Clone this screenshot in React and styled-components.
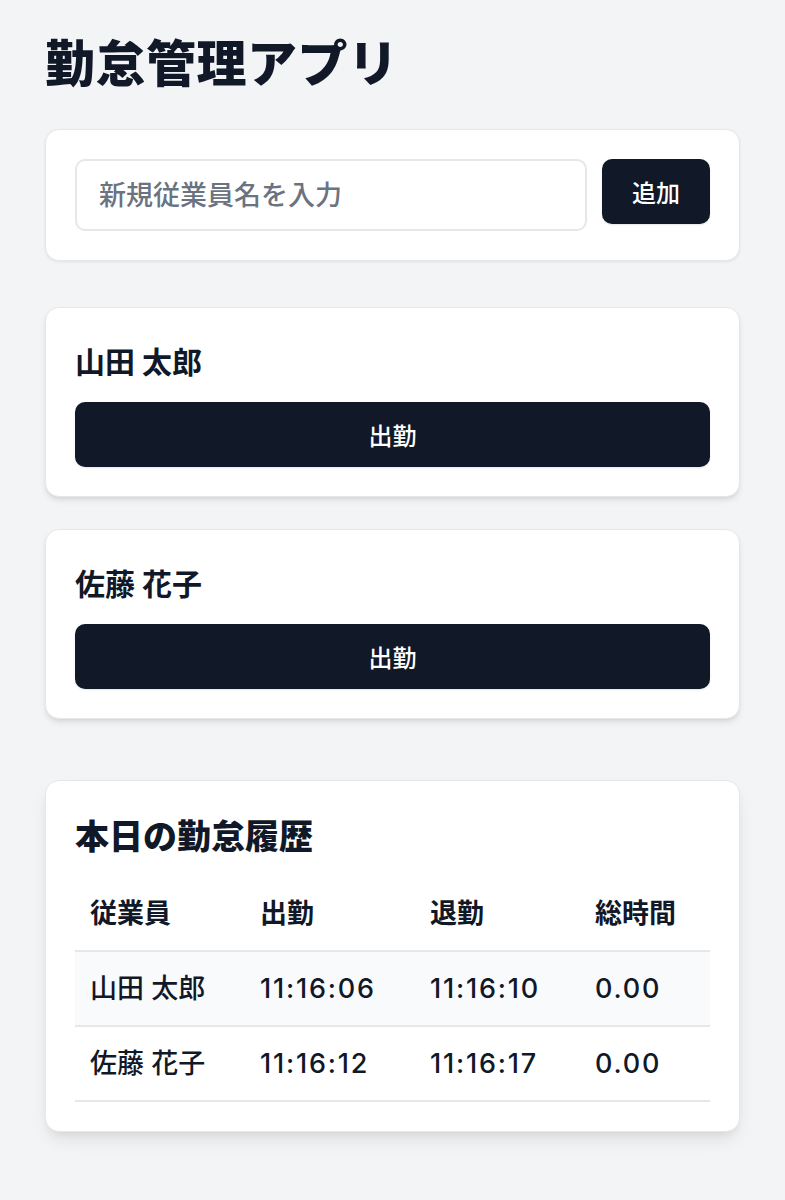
import React, { useState } from 'react';
import styled, { createGlobalStyle } from 'styled-components';

const GlobalStyle = createGlobalStyle`
	* {
		box-sizing: border-box;
	}
	body {
		margin: 0;
		background: #f3f4f6;
		color: #111827;
		font-family: 'Inter', 'Noto Sans CJK JP', sans-serif;
	}
`;

const Page = styled.div`
	padding: 34px 45px 60px;
	display: flex;
	flex-direction: column;
`;

const Title = styled.h1`
	margin: 0 0 35px;
	font-size: 50px;
	line-height: 60px;
	font-weight: 900;
	letter-spacing: 0.5px;
`;

const Card = styled.section`
	background: #fff;
	border: 1px solid #e5e7eb;
	border-radius: 14px;
	padding: 29px;
	box-shadow: ${({ $shadow }) =>
		$shadow === 'lg'
			? '0 10px 18px -4px rgba(0,0,0,0.1), 0 4px 8px -4px rgba(0,0,0,0.08)'
			: $shadow === 'md'
			? '0 4px 6px -1px rgba(0,0,0,0.1), 0 2px 4px -2px rgba(0,0,0,0.08)'
			: '0 1px 3px rgba(0,0,0,0.08)'};
`;

const FormRow = styled.form`
	display: flex;
	align-items: flex-start;
	gap: 15px;
	margin: 0;
`;

const NameInput = styled.input`
	flex: 1;
	height: 72px;
	border: 2px solid #e5e7eb;
	border-radius: 10px;
	padding: 0 22px;
	font-family: inherit;
	font-size: 27px;
	font-weight: 500;
	color: #111827;
	outline: none;
	&::placeholder {
		color: #6b7280;
	}
`;

const DarkButton = styled.button`
	height: 65px;
	padding: 0 30px;
	border: none;
	border-radius: 10px;
	background: #111827;
	color: #fff;
	font-family: inherit;
	font-size: 24px;
	font-weight: 500;
	cursor: pointer;
	box-shadow: 0 1px 2px rgba(0,0,0,0.1);
	width: ${({ $full }) => ($full ? '100%' : 'auto')};
`;

const FormCard = styled(Card)`
	margin-bottom: 46px;
`;

const EmployeeList = styled.div`
	display: flex;
	flex-direction: column;
	gap: 32px;
	margin-bottom: 61px;
`;

const EmployeeName = styled.h3`
	margin: 0 0 15px;
	font-size: 30px;
	line-height: 50px;
	font-weight: 700;
`;

const HistoryTitle = styled.h2`
	margin: 0 0 14px;
	font-size: 34px;
	line-height: 54px;
	font-weight: 900;
`;

const Table = styled.table`
	width: 100%;
	border-collapse: collapse;
	table-layout: fixed;
`;

const Col = styled.col`
	width: ${({ $w }) => $w}px;
`;

const Th = styled.th`
	text-align: left;
	padding: 16px 15px;
	font-size: 27px;
	line-height: 40px;
	font-weight: 700;
	border-bottom: 2px solid #e5e7eb;
`;

const Tr = styled.tr`
	background: ${({ $striped }) => ($striped ? '#f9fafb' : '#fff')};
	border-bottom: 2px solid #e5e7eb;
`;

const Td = styled.td`
	padding: 17px 15px 16px;
	font-size: 27px;
	line-height: 40px;
	font-weight: 500;
	letter-spacing: ${({ $num }) => ($num ? '1.8px' : 'normal')};
`;

const initialEmployees = ['山田 太郎', '佐藤 花子'];

const history = [
	{ name: '山田 太郎', in: '11:16:06', out: '11:16:10', total: '0.00' },
	{ name: '佐藤 花子', in: '11:16:12', out: '11:16:17', total: '0.00' },
];

export default function App() {
	const [employees, setEmployees] = useState(initialEmployees);
	const [name, setName] = useState('');

	const addEmployee = (e) => {
		e.preventDefault();
		if (!name.trim()) return;
		setEmployees([...employees, name.trim()]);
		setName('');
	};

	return (
		<>
			<GlobalStyle />
			<Page>
				<Title>勤怠管理アプリ</Title>

				<FormCard>
					<FormRow onSubmit={addEmployee}>
						<NameInput
							placeholder="新規従業員名を入力"
							value={name}
							onChange={(e) => setName(e.target.value)}
						/>
						<DarkButton type="submit">追加</DarkButton>
					</FormRow>
				</FormCard>

				<EmployeeList>
					{employees.map((emp) => (
						<Card key={emp} $shadow="md">
							<EmployeeName>{emp}</EmployeeName>
							<DarkButton $full>出勤</DarkButton>
						</Card>
					))}
				</EmployeeList>

				<Card $shadow="lg">
					<HistoryTitle>本日の勤怠履歴</HistoryTitle>
					<Table>
						<colgroup>
							<Col $w={170} />
							<Col $w={170} />
							<Col $w={165} />
							<Col $w={130} />
						</colgroup>
						<thead>
							<tr>
								<Th>従業員</Th>
								<Th>出勤</Th>
								<Th>退勤</Th>
								<Th>総時間</Th>
							</tr>
						</thead>
						<tbody>
							{history.map((row, i) => (
								<Tr key={row.name} $striped={i % 2 === 0}>
									<Td>{row.name}</Td>
									<Td $num>{row.in}</Td>
									<Td $num>{row.out}</Td>
									<Td $num>{row.total}</Td>
								</Tr>
							))}
						</tbody>
					</Table>
				</Card>
			</Page>
		</>
	);
}
